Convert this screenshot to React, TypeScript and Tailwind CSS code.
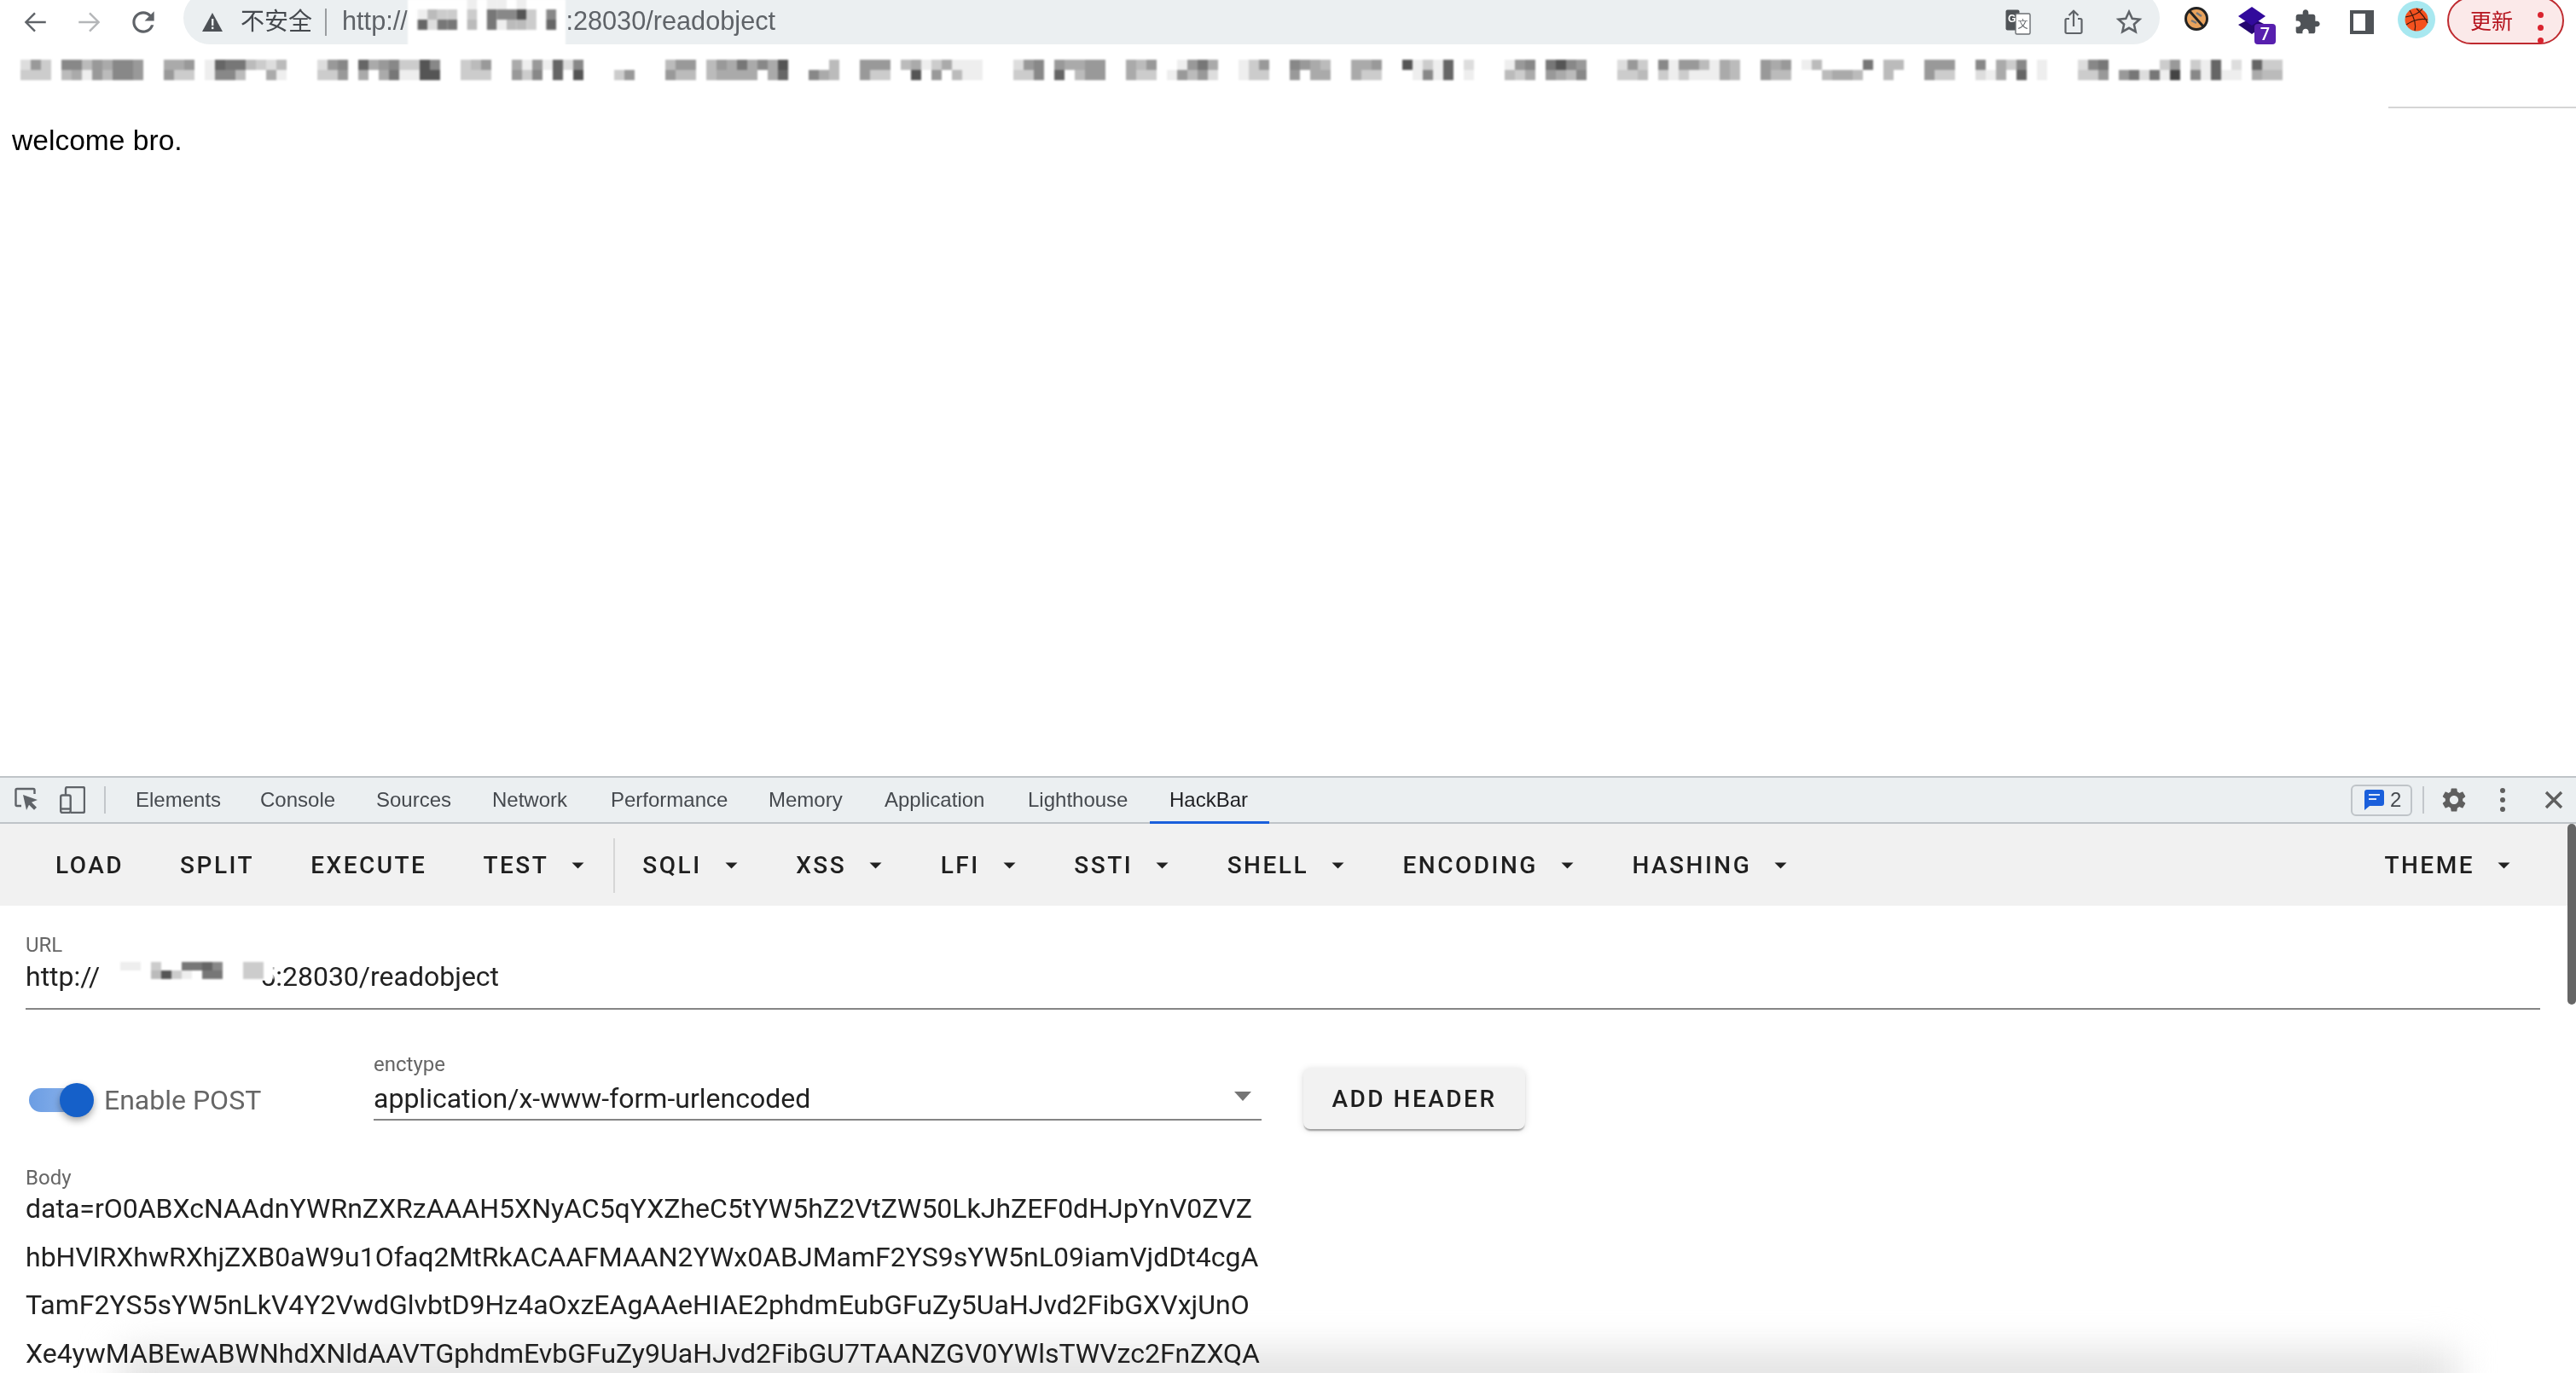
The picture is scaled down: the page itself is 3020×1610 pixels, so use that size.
import React from 'react';

const SANS = "font-['Liberation_Sans','Noto_Sans_CJK_SC',sans-serif]";

// one char per cell: '.' is white, a hex digit is the grey level (c = #cccccc)
const strip: [number, string, string][] = [
  [24, 'd9c', 'ccc'],
  [72, '88b9a889', 'bae9b889'],
  [192, 'aa9', '9cc'],
  [240, 'e677bcdb', 'e88bffae'],
  [372, 'd98', 'cc9'],
  [420, '6a98cc58', 'afa7ee55'],
  [540, 'cb9', 'ccc'],
  [600, 'ae9e6d8f', '9c8f6f5f'],
  [708, 'ff..', 'fc9f'],
  [780, 'b99', '9bb'],
  [828, 'b9a7a8a5', 'baaaafa6'],
  [936, 'ff.b', 'f8ab'],
  [1008, '999', '9cc'],
  [1056, 'baecaeee', '.5.9.bee'],
  [1188, 'd98', 'cc8'],
  [1236, '9aa99', '6.b99'],
  [1320, 'ab9', 'acc'],
  [1368, '.e97a', 'e9b9d'],
  [1452, 'ec9f', 'eccf'],
  [1512, '89ab', '9.aa'],
  [1584, 'aa9', 'acc'],
  [1632, 'f5ece6fd', 'ffe8e6fe'],
  [1764, 'e98', 'bca'],
  [1812, '7589', '9ab8'],
  [1896, 'd9c', 'ccb'],
  [1944, '8e99beab', 'ceceeeab'],
  [2064, '9a9', '9bb'],
  [2112, 'ebffff7', '..baab.'],
  [2208, 'bb', 'b.'],
  [2256, '999', '9cc'],
  [2304, 'f8fac8fef', 'fdeaf6fef'],
  [2436, 'd87', 'cc9'],
  [2484, '.fffc9fce6fdf6cc', '97d7e4f8e6eefabb'],
];

const addressRows = ['.ff...e.ee.e..f.', '.ebcc.c.7885c.8.', '.6d77.b.7ebbc.6.', '................', '................'];
const urlRows = ['.feefc..7768..cc.', '.f..fb5ce.77..cc.'];

const Mosaic = ({ rows, cell, rowH, className }: { rows: string[]; cell: number; rowH: number; className?: string }) => {
  const cols = Math.max(...rows.map((r) => r.length));
  return (
    <svg width={cols * cell} height={rows.length * rowH} className={className}>
      <rect width={cols * cell} height={rows.length * rowH} fill="#ffffff" />
      {rows.map((row, y) =>
        row.split('').map((c, x) =>
          c === '.' ? null : (
            <rect key={`${x}-${y}`} x={x * cell} y={y * rowH} width={cell} height={rowH} fill={`#${c}${c}${c}`} />
          ),
        ),
      )}
    </svg>
  );
};

const StripMosaic = () => (
  <svg width="2700" height="24" className="mt-[18px] blur-[1px]">
    {strip.map(([x0, top, bottom]) =>
      [top, bottom].map((row, y) =>
        row.split('').map((c, i) =>
          c === '.' ? null : (
            <rect key={`${x0}-${y}-${i}`} x={x0 + i * 12} y={y * 12} width="12" height="12" fill={`#${c}${c}${c}`} />
          ),
        ),
      ),
    )}
  </svg>
);

const Caret = ({ className }: { className?: string }) => (
  <svg width="15" height="8" viewBox="0 0 15 8" className={className}>
    <path d="M0.5 0.5h14L7.5 7.5z" fill="#212121" />
  </svg>
);

const BarButton = ({ label, menu, className }: { label: string; menu?: boolean; className?: string }) => (
  <div className={`flex items-center pl-[32px] pr-[32px] ${className ?? ''}`}>
    <span className="text-[28px] font-medium tracking-[2.5px] text-[#1f1f1f]">{label}</span>
    {menu && <Caret className="ml-[27px]" />}
  </div>
);

const tabs = [
  { label: 'Elements', width: 'w-[146px]' },
  { label: 'Console', width: 'w-[136px]' },
  { label: 'Sources', width: 'w-[136px]' },
  { label: 'Network', width: 'w-[139px]' },
  { label: 'Performance', width: 'w-[185px]' },
  { label: 'Memory', width: 'w-[136px]' },
  { label: 'Application', width: 'w-[168px]' },
  { label: 'Lighthouse', width: 'w-[143px]' },
];

const body = [
  'data=rO0ABXcNAAdnYWRnZXRzAAAH5XNyAC5qYXZheC5tYW5hZ2VtZW50LkJhZEF0dHJpYnV0ZVZ',
  'hbHVlRXhwRXhjZXB0aW9u1Ofaq2MtRkACAAFMAAN2YWx0ABJMamF2YS9sYW5nL09iamVjdDt4cgA',
  'TamF2YS5sYW5nLkV4Y2VwdGlvbtD9Hz4aOxzEAgAAeHIAE2phdmEubGFuZy5UaHJvd2FibGXVxjUnO',
  'Xe4ywMABEwABWNhdXNldAAVTGphdmEvbGFuZy9UaHJvd2FibGU7TAANZGV0YWlsTWVzc2FnZXQA',
];

export default function App() {
  return (
    <div className={`relative w-[3020px] h-[1610px] overflow-hidden bg-white flex flex-col ${SANS}`}>
      {/* browser toolbar */}
      <div className="h-[52px] shrink-0 flex items-center overflow-hidden">
        <svg width="34" height="34" viewBox="0 0 24 24" className="ml-[24px]" fill="none" stroke="#5f6368" strokeWidth="1.7">
          <path d="M21 12H4.5M12 4.5L4.5 12l7.5 7.5" />
        </svg>
        <svg width="34" height="34" viewBox="0 0 24 24" className="ml-[30px]" fill="none" stroke="#b4b6b8" strokeWidth="1.7">
          <path d="M3 12h16.5M12 4.5l7.5 7.5-7.5 7.5" />
        </svg>
        <svg width="38" height="38" viewBox="0 0 24 24" className="ml-[27px]" fill="#5f6368">
          <path d="M17.65 6.35C16.2 4.9 14.21 4 12 4c-4.42 0-7.99 3.58-7.99 8s3.57 8 7.99 8c3.73 0 6.84-2.55 7.73-6h-2.08c-.82 2.33-3.04 4-5.65 4-3.31 0-6-2.69-6-6s2.69-6 6-6c1.66 0 3.14.69 4.22 1.78L13 11h7V4l-2.35 2.35z" />
        </svg>

        <div className="ml-[28px] w-[2317px] h-[62px] -mt-[10px] pt-[10px] rounded-full bg-[#ebeff1] flex items-center">
          <svg width="24" height="22" viewBox="0 0 24 22" className="ml-[22px]">
            <path d="M12 0L24 22H0z" fill="#4d5156" />
            <rect x="11" y="7" width="2.4" height="8" fill="#ebeff1" />
            <rect x="11" y="16.5" width="2.4" height="2.6" fill="#ebeff1" />
          </svg>
          <span className="ml-[21px] text-[28px] leading-none text-[#45494e]">不安全</span>
          <div className="ml-[15px] w-[2px] h-[32px] bg-[#9a9da0]" />
          <span className="ml-[18px] -mt-[2px] text-[30.7px] text-[#5f6368]">http://</span>
          <Mosaic rows={addressRows} cell={11.6} rowH={12} className="self-start -mt-[1px] blur-[1px]" />
          <span className="-mt-[2px] text-[30.7px] text-[#5f6368]">:28030/readobject</span>

          <svg width="30" height="30" viewBox="0 0 30 30" className="ml-auto">
            <rect x="0.5" y="0.5" width="16" height="24" rx="2" fill="#4f5357" />
            <rect x="12" y="5" width="17" height="24" rx="1.5" fill="#fff" stroke="#6b6f73" strokeWidth="1.4" />
            <text x="3" y="15" fontSize="12" fontWeight="700" fill="#fff">G</text>
            <text x="14.5" y="22" fontSize="12" fill="#5f6368">文</text>
          </svg>
          <svg width="22" height="30" viewBox="0 0 22 30" className="ml-[39px]" fill="none" stroke="#5f6368" strokeWidth="2.2">
            <path d="M6 11H3a1.5 1.5 0 0 0-1.5 1.5v14A1.5 1.5 0 0 0 3 28h16a1.5 1.5 0 0 0 1.5-1.5v-14A1.5 1.5 0 0 0 19 11h-3M11 20V2M5.5 7L11 1.8 16.5 7" />
          </svg>
          <svg width="32" height="32" viewBox="0 0 24 24" className="ml-[38px] mr-[20px]" fill="none" stroke="#5f6368" strokeWidth="1.9">
            <path d="M12 2.8l2.8 6 6.5.7-4.9 4.4 1.4 6.5L12 17.1l-5.8 3.3 1.4-6.5-4.9-4.4 6.5-.7z" />
          </svg>
        </div>

        <svg width="30" height="30" viewBox="0 0 30 30" className="ml-[28px] -mt-[8px]">
          <circle cx="15" cy="15" r="12.5" fill="#e8a25c" stroke="#222" strokeWidth="3" />
          <path d="M7 6l16 18" stroke="#222" strokeWidth="3" />
          <path d="M9 17l6 3M15 8l6 4" stroke="#777" strokeWidth="2.5" />
        </svg>
        <div className="relative ml-[34px] w-[32px] h-[52px]">
          <svg width="32" height="32" viewBox="0 0 32 32" className="absolute top-[8px] left-0">
            <path d="M16 13L32 21 16 32 0 21z" fill="#24066f" />
            <path d="M16 0L32 11 16 22 0 11z" fill="#320a9c" />
          </svg>
          <div className="absolute left-[19px] top-[28px] w-[25px] h-[24px] rounded-[4px] bg-[#571fae] flex items-center justify-center text-[20px] font-medium text-white font-['Roboto',sans-serif]">
            7
          </div>
        </div>
        <svg width="32" height="32" viewBox="0 0 24 24" className="ml-[33px]" fill="#4f5357">
          <path d="M20.5 11H19V7c0-1.1-.9-2-2-2h-4V3.5C13 2.12 11.88 1 10.5 1S8 2.12 8 3.5V5H4c-1.1 0-1.99.9-1.99 2v3.8H3.5c1.49 0 2.7 1.21 2.7 2.7s-1.21 2.7-2.7 2.7H2V20c0 1.1.9 2 2 2h3.8v-1.5c0-1.49 1.21-2.7 2.7-2.7 1.49 0 2.7 1.21 2.7 2.7V22H17c1.1 0 2-.9 2-2v-4h1.5c1.38 0 2.5-1.12 2.5-2.5S21.88 11 20.5 11z" />
        </svg>
        <svg width="28" height="28" viewBox="0 0 28 28" className="ml-[34px]">
          <path d="M0 0h28v28H0z M4 4v20h14V4z" fill="#4f5357" fillRule="evenodd" />
        </svg>
        <svg width="44" height="44" viewBox="0 0 44 44" className="ml-[28px] -mt-[6px]">
          <circle cx="22" cy="22" r="22" fill="#a8e8f0" />
          <circle cx="22" cy="22" r="13.5" fill="#f4511e" />
          <path d="M9 19c8-1 17-5 20-10M14 11c5 8 8 16 6 24M22 9c6 6 11 12 13 17M10 28c6-4 15-8 25-6" fill="none" stroke="#3a1a10" strokeWidth="1.2" />
        </svg>
        <div className="relative ml-[14px] w-[137px] h-[56px] -mt-[4px] rounded-full border-2 border-[#bf2a2f] bg-[#fbe9e9] flex items-center">
          <span className="ml-[25px] mt-[2px] text-[25px] leading-none text-[#b5141e]">更新</span>
          <div className="absolute left-[104px] top-[15px] flex flex-col gap-[8px] pt-[1px]">
            <div className="w-[7px] h-[7px] rounded-full bg-[#d9232e]" />
            <div className="w-[7px] h-[7px] rounded-full bg-[#d9232e]" />
            <div className="w-[7px] h-[7px] rounded-full bg-[#d9232e]" />
          </div>
        </div>
      </div>

      {/* page */}
      <div className="h-[858px] shrink-0 flex flex-col">
        <StripMosaic />
        <div className="self-end w-[220px] h-[2px] mt-[31px] bg-[#d5d5d5]" />
        <p className="ml-[14px] mt-[18px] text-[33.6px] leading-[40px] text-black">welcome bro.</p>
      </div>

      {/* devtools */}
      <div className="flex-1 flex flex-col min-h-0 relative">
        <div className="h-[56px] shrink-0 border-t-2 border-b-2 border-[#bfc4c8] bg-[#ebeff1] flex items-stretch">
          <svg width="28" height="30" viewBox="0 0 28 30" className="ml-[17px] self-center" fill="none">
            <path d="M8 22H3a1.5 1.5 0 0 1-1.5-1.5v-17A1.5 1.5 0 0 1 3 2h19a1.5 1.5 0 0 1 1.5 1.5V8" stroke="#5f6368" strokeWidth="2.4" />
            <path d="M10 9l17 6-7 2.8 6 6-3 3-6-6L14 27z" fill="#5f6368" />
          </svg>
          <svg width="30" height="32" viewBox="0 0 30 32" className="ml-[25px] self-center" fill="none" stroke="#5f6368" strokeWidth="2.4">
            <path d="M7 10V3a2 2 0 0 1 2-2h18a2 2 0 0 1 2 2v26a2 2 0 0 1-2 2H13" />
            <rect x="1.2" y="10.5" width="11.5" height="20.5" rx="2" />
            <path d="M1.2 26.5h11.5" />
          </svg>
          <div className="ml-[22px] self-center w-[2px] h-[32px] bg-[#c3c7cb]" />
          <div className="ml-[35px] flex items-stretch text-[24px] text-[#45494e]">
            {tabs.map((t) => (
              <div key={t.label} className={`${t.width} flex items-center`}>
                {t.label}
              </div>
            ))}
            <div className="-mb-[2px] w-[140px] pl-[23px] border-b-[3px] border-[#1a5fdb] flex items-center text-[#202124]">HackBar</div>
          </div>
          <div className="ml-auto self-center flex items-center">
            <div className="w-[72px] h-[37px] rounded-[6px] border-2 border-[#bfc4c8] flex items-center pl-[14px]">
              <svg width="23" height="24" viewBox="0 0 23 24">
                <path d="M3 0h17a3 3 0 0 1 3 3v13a3 3 0 0 1-3 3H6L0 24V3a3 3 0 0 1 3-3z" fill="#1a5fdb" />
                <path d="M5 6h13M5 11h9" stroke="#dfe8fa" strokeWidth="2" />
              </svg>
              <span className="ml-[7px] text-[24px] leading-none text-[#45494e]">2</span>
            </div>
            <div className="ml-[12px] w-[2px] h-[32px] bg-[#c3c7cb]" />
            <svg width="34" height="34" viewBox="0 0 24 24" className="ml-[18px]" fill="#5f5f5f">
              <path d="M19.14 12.94c.04-.3.06-.61.06-.94 0-.32-.02-.64-.07-.94l2.03-1.58c.18-.14.23-.41.12-.61l-1.92-3.32c-.12-.22-.37-.29-.59-.22l-2.39.96c-.5-.38-1.03-.7-1.62-.94l-.36-2.54c-.04-.24-.24-.41-.48-.41h-3.84c-.24 0-.43.17-.47.41l-.36 2.54c-.59.24-1.13.57-1.62.94l-2.39-.96c-.22-.08-.47 0-.59.22L2.74 8.87c-.12.21-.08.47.12.61l2.03 1.58c-.05.3-.09.63-.09.94s.02.64.07.94l-2.03 1.58c-.18.14-.23.41-.12.61l1.92 3.32c.12.22.37.29.59.22l2.39-.96c.5.38 1.03.7 1.62.94l.36 2.54c.05.24.24.41.48.41h3.84c.24 0 .44-.17.47-.41l.36-2.54c.59-.24 1.13-.56 1.62-.94l2.39.96c.22.08.47 0 .59-.22l1.92-3.32c.12-.22.07-.47-.12-.61l-2.01-1.58zM12 15.6c-1.98 0-3.6-1.62-3.6-3.6s1.62-3.6 3.6-3.6 3.6 1.62 3.6 3.6-1.62 3.6-3.6 3.6z" />
            </svg>
            <div className="ml-[37px] flex flex-col gap-[5px]">
              <div className="w-[6px] h-[6px] rounded-full bg-[#5f5f5f]" />
              <div className="w-[6px] h-[6px] rounded-full bg-[#5f5f5f]" />
              <div className="w-[6px] h-[6px] rounded-full bg-[#5f5f5f]" />
            </div>
            <svg width="22" height="22" viewBox="0 0 22 22" className="ml-[46px] mr-[15px]" stroke="#5f5f5f" strokeWidth="3.4">
              <path d="M2 2l18 18M20 2L2 20" />
            </svg>
          </div>
        </div>

        {/* hackbar */}
        <div className="flex-1 relative font-['Roboto',sans-serif] min-h-0">
          <div className="h-[96px] pt-[2px] bg-[#f1f1f1] flex items-center pl-[33px] pr-[45px]">
            <div className="flex items-center gap-[2px]">
              <BarButton label="LOAD" />
              <BarButton label="SPLIT" />
              <BarButton label="EXECUTE" />
              <BarButton label="TEST" menu />
            </div>
            <div className="ml-[2px] w-[2px] h-[64px] bg-[#d6d6d6]" />
            <div className="flex items-center gap-[4.5px]">
              <BarButton label="SQLI" menu />
              <BarButton label="XSS" menu />
              <BarButton label="LFI" menu />
              <BarButton label="SSTI" menu />
              <BarButton label="SHELL" menu />
              <BarButton label="ENCODING" menu />
              <BarButton label="HASHING" menu />
            </div>
            <BarButton label="THEME" menu className="ml-auto" />
          </div>

          <div className="pl-[30px] pr-[42px]">
            <div className="pt-[34px] text-[24px] leading-[24px] text-[#666666]">URL</div>
            <div className="mt-[5px] h-[59px] border-b-2 border-[#858585] flex items-start text-[32px] leading-[40px] text-[#212121]">
              <span>http://</span>
              <Mosaic rows={urlRows} cell={12} rowH={10} className="relative z-10 mt-[3px] blur-[1px]" />
              <span className="-ml-[16px]">5:28030/readobject</span>
            </div>

            <div className="mt-[52px] flex items-start">
              <div className="mt-[34px] ml-[4px] w-[404px] flex items-center">
                <div className="relative w-[60px] h-[28px] rounded-full bg-gradient-to-r from-[#6b9de3] to-[#8db4ec]">
                  <div className="absolute left-[36px] -top-[6px] w-[40px] h-[40px] rounded-full bg-[#1560c9] shadow-[0_4px_8px_rgba(0,0,0,0.35)]" />
                </div>
                <span className="ml-[28px] text-[32px] leading-[40px] text-[#666666]">Enable POST</span>
              </div>
              <div className="w-[1041px]">
                <div className="text-[24px] leading-[24px] text-[#666666]">enctype</div>
                <div className="mt-[8px] h-[46px] border-b-2 border-[#858585] flex items-start justify-between text-[32px] leading-[40px] text-[#212121]">
                  <span>application/x-www-form-urlencoded</span>
                  <svg width="20" height="11" viewBox="0 0 20 11" className="mt-[12px] mr-[12px]">
                    <path d="M0 0h20L10 11z" fill="#757575" />
                  </svg>
                </div>
              </div>
              <div className="ml-[49px] mt-[17px] w-[260px] h-[71px] rounded-[8px] bg-[#f2f2f2] shadow-[0_3px_2px_-1px_rgba(0,0,0,0.35),0_1px_8px_rgba(0,0,0,0.15)] flex items-center justify-center text-[28px] font-medium tracking-[2.5px] text-[#1f1f1f]">
                ADD HEADER
              </div>
            </div>

            <div className="mt-[45px] text-[24px] leading-[24px] text-[#666666]">Body</div>
            <div className="-mt-[4px] text-[32px] leading-[56.5px] text-[#212121] whitespace-nowrap">
              {body.map((line) => (
                <div key={line}>{line}</div>
              ))}
            </div>
          </div>

          <div className="absolute right-0 top-0 w-[10px] h-[212px] rounded-full bg-[#666666]" />
        </div>
      </div>

      {/* soft window shadow along the bottom edge */}
      <div className="absolute -bottom-[34px] left-[140px] right-[140px] h-[60px] bg-[#e2e2e2] blur-[22px] mix-blend-multiply pointer-events-none" />
    </div>
  );
}
